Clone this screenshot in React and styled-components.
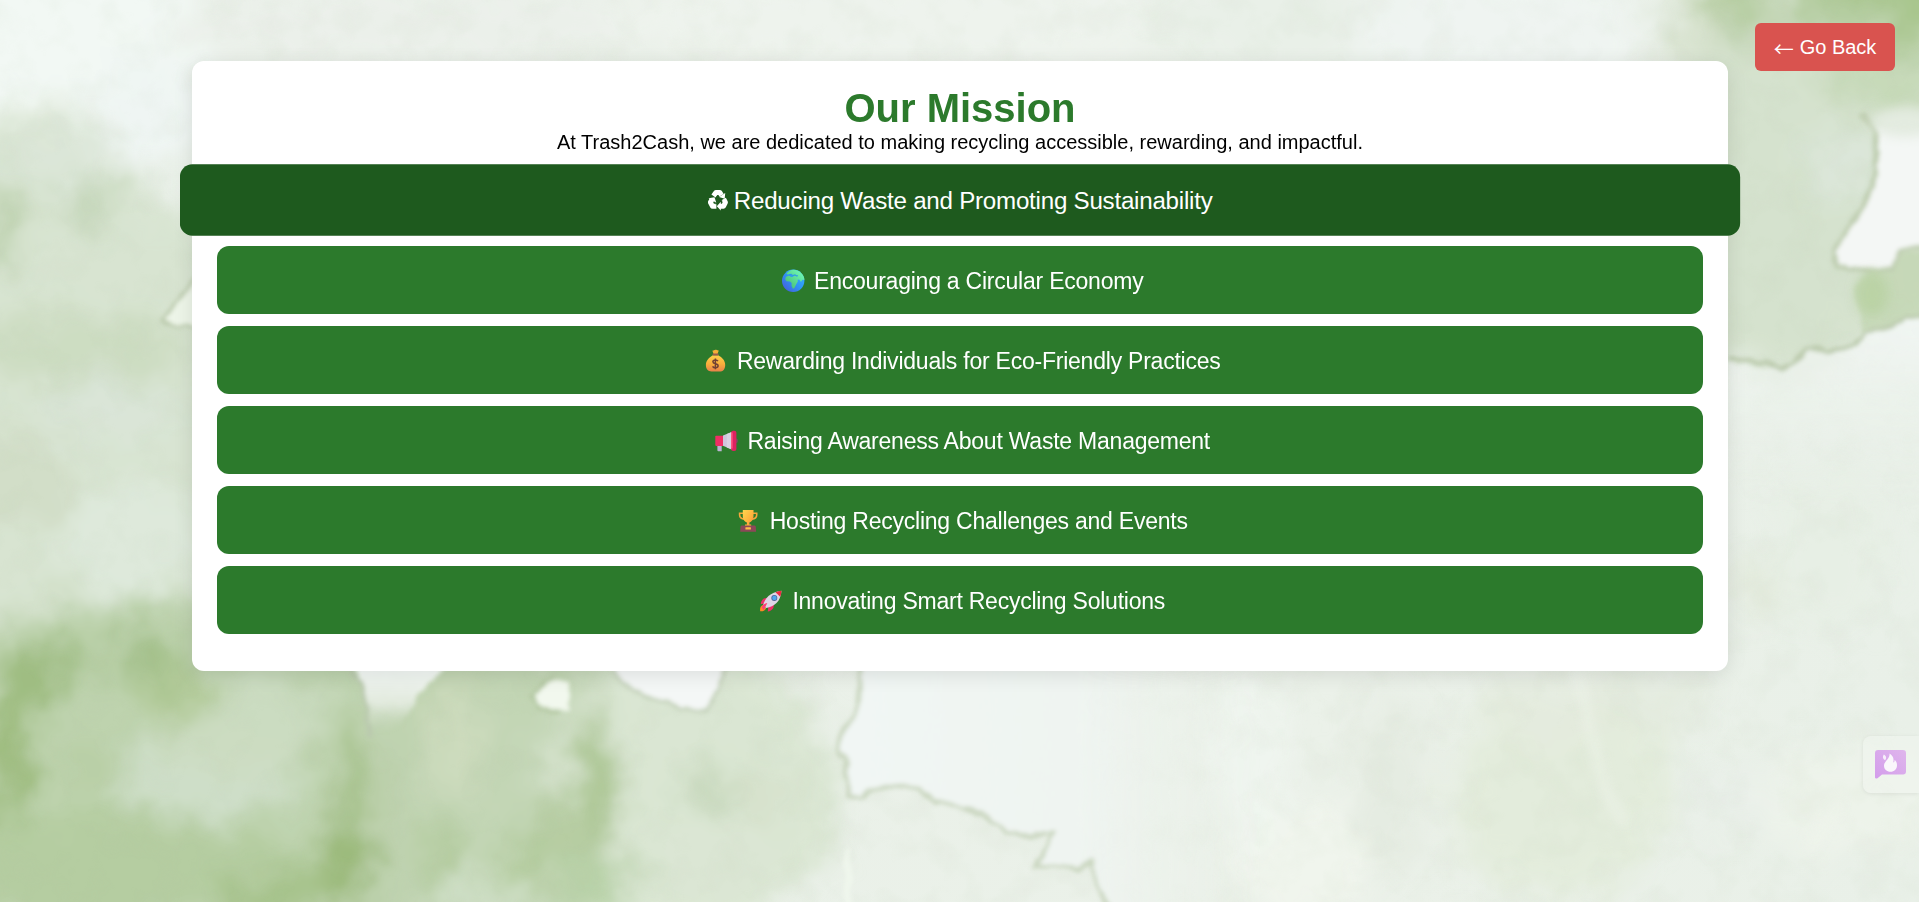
import React from "react";
import styled, { createGlobalStyle } from "styled-components";

const GlobalStyle = createGlobalStyle`
  * { box-sizing: border-box; margin: 0; padding: 0; }
  body { font-family: Arial, "Liberation Sans", sans-serif; background: #e9f0e8; overflow: hidden; }
`;

const Page = styled.main`
  position: relative;
  min-height: 100vh;
  padding-top: 61px;
  overflow: hidden;
`;

const Backdrop = styled.svg`
  position: absolute;
  inset: 0;
  width: 100%;
  height: 100%;
  z-index: -1;
`;

const Card = styled.section`
  width: calc(80% + 0.8px);
  height: 610px;
  margin-left: calc(10% + 0.1px);
  padding: 25px;
  background: #fff;
  border-radius: 12px;
  box-shadow: 0 4px 20px rgba(0, 0, 0, 0.1);
  text-align: center;
`;

const Title = styled.h1`
  font-size: 40px;
  line-height: 45px;
  color: #2c7a2c;
`;

const Lead = styled.p`
  font-size: 20px;
  line-height: 23px;
  color: #000;
`;

const MissionList = styled.ul`
  list-style: none;
  display: flex;
  flex-direction: column;
  gap: 12px;
  margin-top: 12px;
`;

const MissionItem = styled.li`
  display: flex;
  justify-content: center;
  align-items: center;
  gap: ${(p) => (p.$active ? 6 : 7.5)}px;
  height: 68px;
  border-radius: 12px;
  background: ${(p) => (p.$active ? "#1e5a1e" : "#2c7a2c")};
  transform: ${(p) => (p.$active ? "scale(1.05)" : "none")};
  color: #fff;
  font-size: 23px;
  letter-spacing: -0.23px;
  line-height: 28px;
`;

const Label = styled.span`
  padding-top: 2px;
`;

const Emoji = styled.svg`
  width: ${(p) => p.$w}px;
  height: 24px;
  flex: none;
`;

const BackButton = styled.button`
  position: absolute;
  top: 23px;
  right: 24px;
  display: flex;
  justify-content: center;
  align-items: center;
  gap: 6px;
  width: 140px;
  height: 48px;
  border: 0;
  border-radius: 6px;
  background: #d9534f;
  color: #fff;
  font: 20px Arial, "Liberation Sans", sans-serif;
  white-space: nowrap;
`;

const Arrow = styled.span`
  padding-top: 3px;
  font-family: "Noto Sans CJK SC", sans-serif;
  font-size: 20px;
  line-height: 20px;
`;

const FeedbackTab = styled.aside`
  position: absolute;
  top: 736px;
  right: 0;
  width: 56px;
  height: 57px;
  padding: 14px 0 0 12px;
  border-radius: 8px 0 0 8px;
  background: rgba(240, 245, 238, 0.6);
  box-shadow: 0 1px 4px rgba(0, 0, 0, 0.08);
`;

const Recycle = () => (
  <Emoji $w={19} viewBox="0 0 19 24" aria-label="recycling">
    <g fill="none" stroke="#fff" strokeWidth="4.8" strokeLinejoin="round">
      <path d="M5.2 8.2 7.6 4.800h3.600l1.700 2.700" />
      <path d="m14.900 11 1.700 3.200-1.800 3.700h-3.400" />
      <path d="M8 18H4.300l-2-3.800 1.500-2.600" />
    </g>
    <g fill="#fff">
      <path d="m16.400 5.300-.5 5.600-5.400-1.800zM12.200 13.600v8.400l-3.800-4.100zM.5 10.300l5.700-.9 1.700 5.100z" />
    </g>
    <path d="m7.500 10.500 1.300-2.200M13.500 13.200l-1.500-2.400M7 15.600h2.600" stroke="#1e5a1e" strokeWidth=".8" />
  </Emoji>
);

const Globe = () => (
  <Emoji $w={30} viewBox="0 0 30 24">
    <defs>
      <linearGradient id="sea" x1="1" y1="0" x2="0" y2="1">
        <stop stopColor="#38b9ff" /><stop offset=".5" stopColor="#2f94f5" /><stop offset="1" stopColor="#4a52d6" />
      </linearGradient>
      <linearGradient id="land" x1="1" y1="0" x2="0" y2="1">
        <stop stopColor="#75ffc0" /><stop offset="1" stopColor="#42b76a" />
      </linearGradient>
    </defs>
    <circle cx="16.2" cy="12.8" r="11.2" fill="url(#sea)" />
    <path fill="url(#land)" d="M9.300 5.600C11.500 3 14.200 1.600 17 1.800c4.700.2 9 3.600 10.200 8.300l.1 2-2-.3-1.300 2.200-1.900-2.500-1.600.2.400 1.600-1.700 3-1.800 3.700-1.500.7-1.400-3.100.2-2.600-1.700-1.400-3.500-.3-1.300-2.100.8-2.500 2.900-1 2.500 1.400 2.200-.4-1.600-1.200-1.700-.9-1.500.7z" />
    <path d="m11.300 6.700 2.800-.3 1.800 1.200 2.100-.7 1.500 1 1.400-.2" stroke="#2f98e8" strokeWidth="1.100" fill="none" />
  </Emoji>
);

const MoneyBag = () => (
  <Emoji $w={30} viewBox="0 0 30 24">
    <defs>
      <linearGradient id="bag" x1="0" y1="0" x2="0" y2="1">
        <stop stopColor="#ffcf4b" /><stop offset=".55" stopColor="#f8ad3c" /><stop offset="1" stopColor="#e8814b" />
      </linearGradient>
    </defs>
    <g transform="translate(.8 0)">
      <path d="M12.500 2.600c1.300.2 1.900-.8 3.100-.9s1.900.9 3.400.7l-1.300 3.600h-3.900z" fill="#f6ae38" />
      <path d="M13 7.300h5.500c3.900 2.200 6.900 5.500 6.900 9.600 0 4.300-2.300 6.600-5.700 6.600h-8c-3.400 0-5.600-2.300-5.600-6.400 0-4.100 2.900-7.600 6.900-9.800z" fill="url(#bag)" />
      <rect x="12.700" y="5.500" width="6.200" height="2.100" rx="1" fill="#9a5b4b" />
      <path d="M18.200 13.100c-.6-.9-1.400-1.200-2.600-1.200-1.500 0-2.500.7-2.500 1.900 0 2.700 5.200 1.200 5.200 4 0 1.200-1.100 2-2.700 2-1.400 0-2.300-.5-2.800-1.500M15.600 10.500v10.800" fill="none" stroke="#714034" strokeWidth="1.500" />
    </g>
  </Emoji>
);

const Megaphone = () => (
  <Emoji $w={30} viewBox="0 0 30 24">
    <g transform="translate(.8 0)">
      <path d="M6.600 15.500h4.300v7.700H7.500c-.6 0-.9-.3-.9-.9z" fill="#bdb3d4" />
      <path d="M5.300 7.800h7v10.100h-7c-.5 0-.8-.3-.8-.8V8.600c0-.5.300-.8.800-.8z" fill="#ef2f64" />
      <path d="M12.200 7.600 21 4v17.500l-8.800-3.800z" fill="#cfc6dc" />
      <path d="m16 6.100 5-2.100v17.500l-5-2.100z" fill="#d9d2e2" />
      <rect x="20.300" y="2.800" width="5.300" height="20.200" rx="2" fill="#dd2261" />
      <path d="M20.300 4.500h1.500v16h-1.500z" fill="#ff5b82" />
      <path d="M25.600 10.400c1.600.4 1.600 4.300 0 4.800z" fill="#a23576" />
    </g>
  </Emoji>
);

const Trophy = () => (
  <Emoji $w={30} viewBox="0 0 30 24">
    <defs>
      <linearGradient id="cup" x1="0" y1="0" x2="1" y2="1">
        <stop stopColor="#ffd650" /><stop offset=".6" stopColor="#ffb23c" /><stop offset="1" stopColor="#f5823f" />
      </linearGradient>
    </defs>
    <path d="M11.500 5.200H7.600v1.800c0 2.500 2 3.900 5 4.300M20.800 5.200h3.900v1.800c0 2.500-2 3.900-5 4.300" fill="none" stroke="#f6a63c" strokeWidth="1.600" />
    <path d="M10.800 2H21.500v6.500c0 3.500-2.100 5.300-4.100 5.900v3h-2.500v-3c-2-.6-4.100-2.400-4.100-5.900z" fill="url(#cup)" />
    <path d="M13 16.500h6.200v1.500H13z" fill="#ffb23c" />
    <path d="M10.200 17.600h11.900c1 0 1.600.5 1.700 1.400l.3 4.800H8.200l.3-4.800c.1-.9.700-1.400 1.700-1.400z" fill="#8c4858" />
    <rect x="13.400" y="19.300" width="5.500" height="2.100" rx=".5" fill="#ffbd4a" />
  </Emoji>
);

const Rocket = () => (
  <Emoji $w={30} viewBox="0 0 30 24">
    <path d="M5.200 23.300c-.5-3.200.3-5.400 2.700-6.300l3.300 3c-.9 2.600-3.200 3.600-6 3.300z" fill="#ff8a24" />
    <path d="m12.500 9.700-3.700.9c-2 1.700-3 3.500-3 5.700l5.500-1.200zM19.200 15.800l-.9 4.100c-1.500 2.200-3.300 3.200-5.500 3.700l.6-5.700z" fill="#ee2e68" />
    <path d="M8 17.500C9.600 10.400 14.800 4.200 26.500 2.700c-.7 11-7.500 15.700-15.200 17.400z" fill="#e0d6e6" />
    <path d="M20.500 4.300c1.900-.8 4-1.400 6-1.600-.1 2.200-.6 4.200-1.300 6z" fill="#ef2940" />
    <path d="m12.300 15.100-3.500 7.200-2-2.800c.7-2.400 2.500-4.200 5.500-4.400z" fill="#ff3d78" />
    <circle cx="19.300" cy="10" r="3" fill="#4e669b" />
    <circle cx="19.400" cy="9.900" r="2.200" fill="#50a7ed" />
  </Emoji>
);

const missions = [
  { icon: Recycle, label: "Reducing Waste and Promoting Sustainability", active: true },
  { icon: Globe, label: "Encouraging a Circular Economy" },
  { icon: MoneyBag, label: "Rewarding Individuals for Eco-Friendly Practices" },
  { icon: Megaphone, label: "Raising Awareness About Waste Management" },
  { icon: Trophy, label: "Hosting Recycling Challenges and Events" },
  { icon: Rocket, label: "Innovating Smart Recycling Solutions" },
];

// [cx, cy, rx, ry, colour, opacity]
const washes = [
  [60, 30, 150, 90, "#f2f8f4", 1],
  [150, 110, 60, 50, "#eff5f3", 1],
  [420, 25, 260, 45, "#ebf0ea", 1],
  [900, 20, 300, 50, "#eef3ed", 1],
  [1300, 20, 160, 60, "#e9f0e8", 1],
  [1500, 30, 150, 60, "#eff4f1", 1],
  [60, 400, 200, 230, "#d8e4d1", 1],
  [80, 350, 110, 40, "#ccdcc0", 0.9],
  [0, 225, 20, 44, "#bdd0ad", 0.9],
  [90, 205, 32, 20, "#c3d5b7", 0.9],
  [45, 122, 34, 20, "#dbe6d2", 0.8],
  [60, 155, 60, 36, "#dce6d8", 0.9],
  [110, 410, 70, 30, "#dae5d8", 1],
  [20, 480, 60, 50, "#d2dec8", 1],
  [130, 540, 70, 60, "#dee9db", 1],
  [170, 760, 330, 160, "#bed3ae", 1],
  [440, 800, 120, 150, "#bfd3b0", 1],
  [500, 820, 90, 150, "#c3d6b5", 1],
  [690, 790, 150, 140, "#dae6d3", 1],
  [240, 705, 90, 34, "#cbdcc1", 1],
  [205, 785, 90, 40, "#cfdfc9", 1],
  [235, 745, 80, 25, "#ccdcc1", 1],
  [120, 870, 170, 60, "#b4cca0", 0.9],
  [8, 755, 22, 75, "#98b877", 0.9],
  [35, 675, 28, 30, "#99b97a", 0.9],
  [70, 655, 24, 20, "#a0be84", 0.8],
  [145, 658, 32, 24, "#9fbd84", 0.9],
  [180, 695, 38, 25, "#abc68f", 0.8],
  [85, 765, 24, 25, "#b6cda1", 0.8],
  [352, 795, 15, 75, "#a0be82", 0.9],
  [342, 862, 32, 30, "#97b774", 0.9],
  [280, 898, 60, 22, "#a2c085", 0.9],
  [390, 805, 24, 60, "#bed1ae", 0.8],
  [440, 855, 18, 36, "#abc693", 0.7],
  [455, 740, 26, 60, "#cedcbe", 0.9],
  [595, 780, 24, 70, "#a4c18a", 0.85],
  [570, 835, 44, 42, "#afc899", 0.8],
  [598, 885, 36, 28, "#b6d0a5", 0.9],
  [520, 865, 18, 25, "#a8c58d", 0.6],
  [710, 792, 26, 24, "#c3d6b8", 0.8],
  [760, 800, 26, 18, "#d5dfc8", 0.8],
  [720, 860, 60, 35, "#dbe6d5", 0.8],
  [480, 900, 60, 18, "#d6e4d0", 0.7],
  [1790, 180, 110, 200, "#d5e2ce", 1],
  [1900, 2, 110, 44, "#a4c387", 0.9],
  [1735, 0, 34, 20, "#a8c58d", 0.9],
  [1800, 24, 90, 26, "#bfd3b0", 0.7],
  [1690, 30, 26, 44, "#d3dfc8", 0.8],
  [1840, 165, 35, 40, "#dce7dc", 0.8],
  [1890, 80, 80, 26, "#c4d8b6", 0.9],
  [1560, 790, 110, 110, "#e3ecdc", 1],
  [1540, 710, 50, 40, "#e3ebde", 0.8],
  [1390, 780, 36, 90, "#e4ebe1", 0.9],
  [1640, 700, 70, 30, "#e2eadc", 0.8],
  [1300, 860, 70, 60, "#f1f5ed", 0.9],
  [1250, 760, 40, 90, "#eff5f0", 0.9],
  [1750, 800, 60, 30, "#e9efe9", 1],
  [1850, 800, 90, 55, "#edf3ea", 1],
  [1760, 590, 28, 30, "#e2eadb", 0.8],
  [1830, 550, 60, 80, "#e7efe5", 1],
];

const torn =
  "M862 660 L859 700 853 720 840 737 838 750 847 765 848 796 862 799 870 790 893 786 920 789 935 802 962 808 985 816 1008 832 1032 836 1054 832 1045 849 1035 867 1062 865 1078 870 1090 862 1096 884 1109 910";

const Watercolor = () => (
  <Backdrop viewBox="0 0 1919 902" preserveAspectRatio="none" aria-hidden="true">
    <defs>
      <filter id="wash" x="-10%" y="-10%" width="120%" height="120%">
        <feGaussianBlur stdDeviation="14" result="soft" />
        <feTurbulence type="fractalNoise" baseFrequency="0.025" numOctaves="4" seed="8" />
        <feDisplacementMap in="soft" scale="48" xChannelSelector="R" yChannelSelector="G" />
        <feGaussianBlur stdDeviation="2.5" />
      </filter>
      <filter id="edge" x="-10%" y="-10%" width="120%" height="120%">
        <feTurbulence type="fractalNoise" baseFrequency="0.06" numOctaves="3" seed="3" result="n" />
        <feDisplacementMap in="SourceGraphic" in2="n" scale="8" xChannelSelector="R" yChannelSelector="G" />
        <feGaussianBlur stdDeviation="2" />
      </filter>
      <filter id="blur" x="-40%" y="-40%" width="180%" height="180%"><feGaussianBlur stdDeviation="6" /></filter>
      <filter id="grain" x="0" y="0" width="100%" height="100%">
        <feTurbulence type="fractalNoise" baseFrequency="0.028" numOctaves="3" seed="21" />
        <feColorMatrix values="0 0 0 0 .48  0 0 0 0 .58  0 0 0 0 .40  1.5 0 0 0 -.65" />
      </filter>
      <linearGradient id="paper" x1="0" x2="1">
        <stop stopColor="#e9f0e8" /><stop offset=".7" stopColor="#ebf1e9" /><stop offset="1" stopColor="#e9f0e8" />
      </linearGradient>
      <linearGradient id="fade" x1="0" y1="0" x2="0" y2="1">
        <stop stopColor="#f1f6f3" /><stop offset="1" stopColor="#e9f0e8" stopOpacity="0" />
      </linearGradient>
      <linearGradient id="pale" gradientUnits="userSpaceOnUse" x1="850" y1="0" x2="1260" y2="0">
        <stop stopColor="#f1f6f4" /><stop offset=".55" stopColor="#eff4f1" /><stop offset="1" stopColor="#ecf2ea" stopOpacity="0" />
      </linearGradient>
      <linearGradient id="gap" x1="0" y1="0" x2="0" y2="1">
        <stop offset=".2" stopColor="#f4f9f6" /><stop offset=".6" stopColor="#e2eade" /><stop offset="1" stopColor="#cbdac1" stopOpacity="0" />
      </linearGradient>
    </defs>
    <rect width="1919" height="902" fill="url(#paper)" />
    <g filter="url(#wash)">
      <path d="M-40 120 L40 110 100 150 150 210 210 260 210 660 -40 660Z" fill="#d8e4d1" />
      <path d="M-40 635 L60 610 130 635 190 610 500 640 620 660 600 940 -40 940Z" fill="#bfd3b0" />
      <path d="M1690 -30 L1960 -30 1960 300 1850 340 1700 365Z" fill="#d3e0ca" />
      {washes.map(([cx, cy, rx, ry, fill, opacity], i) => (
        <ellipse key={i} cx={cx} cy={cy} rx={rx} ry={ry} fill={fill} opacity={opacity} />
      ))}
    </g>
    <rect width="1919" height="902" filter="url(#grain)" opacity=".13" />
    <g filter="url(#edge)">
      <path d="M352 655 L364 690 368 732 400 728 416 698 455 655Z" fill="url(#gap)" />
      <path d={torn + " L1330 910 1270 660Z"} fill="url(#pale)" />
      <path d={torn} fill="none" stroke="#cbd7c1" strokeWidth="4.500" />
      <path d="M210 262 L161 321 173 326 210 327Z" fill="#edf5e8" stroke="#bac9ab" strokeWidth="3" />
      <path d="M350 668 L361 683 366 706 370 738" fill="none" stroke="#b9c7ae" strokeWidth="3.500" />
      <path d="M568 682 L552 680 537 690 535 700 546 708 570 710Z" fill="#f2f8ee" />
      <path d="M556 677 L542 684 532 696 540 708 562 713" fill="none" stroke="#b5c9a4" strokeWidth="4" />
      <path d="M608 660 L624 683 645 697 668 704 680 709 704 710 712 700 720 686 733 660Z" fill="#f4f7f6" />
      <path d="M612 668 L624 683 645 697 668 702 680 709 704 711 712 700 720 686 731 662" fill="none" stroke="#c5d2bb" strokeWidth="4" />
      <path d="M845 848 L850 848 852 910 845 910Z" fill="#eff6ec" />
      <path d="M1887 125 L1877 125 1880 150 1875 180 1860 210 1834 250 1835 264 1846 270 1892 271 1900 254 1915 247 1935 247 1935 125Z" fill="#f4f7f5" />
      <path d="M1862 113 L1876 130 1877 170 1866 200 1833 251 1836 266 1848 269 1892 270 1900 251 1918 247 1935 248" fill="none" stroke="#bfceb1" strokeWidth="4.500" />
      <path d="M1870 270 L1892 272 1902 254 1935 251 1935 318 1908 316 1890 327 1862 333 1855 290Z" fill="#c3d6b3" opacity=".8" />
      <path d="M1728 363 L1765 368 1780 370 1805 350 1828 353 1857 345 1864 333 1890 326 1908 316 1935 319 1935 510 1728 510Z" fill="url(#fade)" />
      <path d="M1728 358 L1765 362 1780 370 1795 361 1805 350 1820 348 1828 352 1857 344 1864 333 1890 326 1908 316 1935 319" fill="none" stroke="#bccbae" strokeWidth="4.500" />
    </g>
    <path d="M1579 672 L1590 730 1605 790 1625 825M1842 800 L1810 850" fill="none" stroke="#f0f5ec" strokeWidth="9" opacity=".6" filter="url(#blur)" />
    <ellipse cx="1872" cy="294" rx="16" ry="22" fill="#b6d09e" opacity=".7" filter="url(#blur)" />
    <ellipse cx="1905" cy="122" rx="34" ry="15" fill="#e3ebe0" filter="url(#blur)" />
  </Backdrop>
);

const ChatFlame = () => (
  <svg width="31" height="29" viewBox="0 0 31 29">
    <defs>
      <linearGradient id="chat" x1="0" y1="1" x2="1" y2="0">
        <stop stopColor="#d39ceb" /><stop offset="1" stopColor="#dfb6ec" />
      </linearGradient>
    </defs>
    <path d="M3 0h25a3 3 0 0 1 3 3v18.500a3 3 0 0 1-3 3H7l-4.500 3.800C1.300 29 0 28.500 0 27.200V3a3 3 0 0 1 3-3z" fill="url(#chat)" />
    <path d="M14.600 3.600c3.400 2.300 4.500 5 3.700 8.400.3 1 1.100.5 1.300-2 1.800 1.200 2.400 3.200 2.400 5.200 0 3.900-2.800 6.500-6.500 6.500S9 19.200 9 15.700c0-4.700 5.800-6.600 5.600-12.100z" fill="#faf7fb" />
    <path d="M8.800 4.500c2.500 1.200 3 3.800 1.200 5.800-2.500-1.400-2.600-3.800-1.200-5.800z" fill="#f7effa" />
  </svg>
);

export default function App() {
  return (
    <>
      <GlobalStyle />
      <Page>
        <Watercolor />
        <Card>
          <Title>Our Mission</Title>
          <Lead>At Trash2Cash, we are dedicated to making recycling accessible, rewarding, and impactful.</Lead>
          <MissionList>
            {missions.map(({ icon: Icon, label, active }) => (
              <MissionItem key={label} $active={active}>
                <Icon />
                <Label>{label}</Label>
              </MissionItem>
            ))}
          </MissionList>
        </Card>
        <BackButton><Arrow>←</Arrow> Go Back</BackButton>
        <FeedbackTab><ChatFlame /></FeedbackTab>
      </Page>
    </>
  );
}
